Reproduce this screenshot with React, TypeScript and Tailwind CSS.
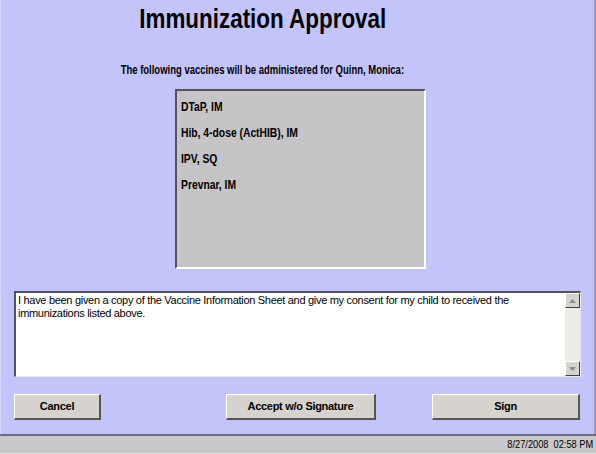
const vaccines = ['DTaP, IM', 'Hib, 4-dose (ActHIB), IM', 'IPV, SQ', 'Prevnar, IM'];

function ScrollArrow({ up }: { up?: boolean }) {
  return (
    <div className="h-[15px] w-[15px] bg-[#d6d3ce] border-t border-l border-t-white border-l-white border-b border-r border-b-[#404040] border-r-[#404040] flex items-center justify-center">
      <svg width="7" height="4" viewBox="0 0 7 4">
        <path d={up ? 'M0 4 L3.5 0 L7 4 Z' : 'M0 0 L3.5 4 L7 0 Z'} fill="#8a8a8a" />
      </svg>
    </div>
  );
}

function Button({ label, width }: { label: string; width: string }) {
  return (
    <button
      className={`${width} h-[26px] bg-[#d6d3ce] border-t border-l border-t-white border-l-white border-b-2 border-r-2 border-b-[#555] border-r-[#555] text-[11px] font-bold text-black tracking-[-0.3px]`}
    >
      {label}
    </button>
  );
}

export default function App() {
  return (
    <div className="w-[596px] h-[454px] flex flex-col bg-[#c4c4fc] font-['Liberation_Sans',Arial,sans-serif] text-black">
      <div className="flex-1 flex flex-col border-l border-l-[#d8d8ff] border-r-2 border-r-[#9a9ab4]">
        <h1 className="mt-[3px] pr-[70px] text-center text-[27px] leading-[32px] font-bold">
          <span className="inline-block scale-x-[0.83]">Immunization Approval</span>
        </h1>

        <p className="mt-[28px] pr-[70px] text-center text-[12px] leading-[14px] font-bold">
          <span className="inline-block scale-x-[0.79]">
            The following vaccines will be administered for Quinn, Monica:
          </span>
        </p>

        {/* vaccine list */}
        <div className="mt-[12px] ml-[174px] w-[251px] h-[180px] bg-[#c6c4c6] border-t-2 border-l-2 border-t-[#555] border-l-[#555] border-b-2 border-r-2 border-b-white border-r-white pt-[3px] pl-[4px]">
          {vaccines.map((v) => (
            <div key={v} className="h-[26px] leading-[26px] text-[12px] font-bold">
              <span className="inline-block origin-left scale-x-[0.86]">{v}</span>
            </div>
          ))}
        </div>

        {/* consent text */}
        <div className="mt-[22px] mx-[13px] h-[86px] flex bg-white border-t-2 border-l-2 border-t-[#555] border-l-[#555] border-b border-r border-b-[#e8e8e8] border-r-[#e8e8e8]">
          <p className="flex-1 px-[2px] pt-[1px] text-[11px] leading-[13px] tracking-[-0.3px]">
            I have been given a copy of the Vaccine Information Sheet and give my consent for my child to received the immunizations listed above.
          </p>
          <div className="w-[15px] flex flex-col justify-between bg-[#ecebe8]">
            <ScrollArrow up />
            <ScrollArrow />
          </div>
        </div>

        <div className="mt-[17px] pl-[13px] flex">
          <Button label="Cancel" width="w-[87px]" />
          <div className="w-[125px]" />
          <Button label="Accept w/o Signature" width="w-[150px]" />
          <div className="w-[56px]" />
          <Button label="Sign" width="w-[148px]" />
        </div>
      </div>

      <div className="h-[2px] bg-[#6c6c7c]" />
      <div className="h-[18px] bg-[#c8c8c8] border-b border-b-[#e0e0e0] flex items-center justify-end pr-[3px] text-[11px] whitespace-pre">
        <span className="inline-block origin-right scale-x-[0.84]">8/27/2008  02:58 PM</span>
      </div>
    </div>
  );
}
